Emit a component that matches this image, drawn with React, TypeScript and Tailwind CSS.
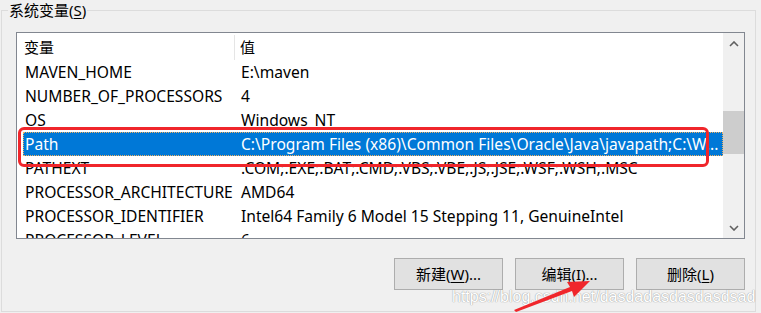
import React from "react";

const rows: { name: string; value: string; selected?: boolean }[] = [
  { name: "MAVEN_HOME", value: "E:\\maven" },
  { name: "NUMBER_OF_PROCESSORS", value: "4" },
  { name: "OS", value: "Windows_NT" },
  { name: "Path", value: "C:\\Program Files (x86)\\Common Files\\Oracle\\Java\\javapath;C:\\W...", selected: true },
  { name: "PATHEXT", value: ".COM;.EXE;.BAT;.CMD;.VBS;.VBE;.JS;.JSE;.WSF;.WSH;.MSC" },
  { name: "PROCESSOR_ARCHITECTURE", value: "AMD64" },
  { name: "PROCESSOR_IDENTIFIER", value: "Intel64 Family 6 Model 15 Stepping 11, GenuineIntel" },
  { name: "PROCESSOR_LEVEL", value: "6" },
];

function Btn({ label, hot, tail }: { label: string; hot: string; tail: string }) {
  return (
    <button className="flex h-[32px] w-[109px] items-center justify-center border border-[#adadad] bg-[#e1e1e1] text-[15px] text-black">
      {label}(<span className="underline underline-offset-2">{hot}</span>){tail}
    </button>
  );
}

export default function App() {
  return (
    <div
      className="relative h-[313px] w-[761px] overflow-hidden bg-[#f0f0f0] text-black"
      style={{ fontFamily: '"Noto Sans", "Noto Sans CJK SC", sans-serif' }}
    >
      {/* Group box */}
      <div className="relative ml-[1px] mt-[10px] flex h-[302px] w-[755px] flex-col border border-[#dcdcdc]">
        <div className="absolute -top-[11px] left-[6px] bg-[#f0f0f0] px-[1px] text-[15px] leading-[20px]">
          系统变量(<span className="underline underline-offset-2">S</span>)
        </div>

        {/* List view */}
        <div className="ml-[14px] mt-[21px] flex h-[207px] w-[729px] border border-[#828790] bg-white">
          <div className="flex min-w-0 flex-1 flex-col overflow-hidden">
            <div className="flex h-[27px] shrink-0 items-center pt-[2px] text-[15px]">
              <div className="flex h-full w-[218px] items-center border-r border-[#e5e5e5] pl-[7px]">变量</div>
              <div className="pl-[5px]">值</div>
            </div>
            {rows.map((r) => (
              <div
                key={r.name}
                className={
                  "ml-[6px] flex h-[24px] shrink-0 items-center whitespace-nowrap pt-[2px] text-[15.6px] " +
                  (r.selected ? "bg-[#0078d7] text-white outline outline-1 outline-dotted outline-[#f0b060] -outline-offset-1" : "")
                }
              >
                <div className="w-[212px] pl-[2px]">{r.name}</div>
                <div className="pl-[6px]">{r.value}</div>
              </div>
            ))}
          </div>
          {/* Scrollbar */}
          <div className="flex w-[21px] shrink-0 flex-col items-center bg-[#f0f0f0]">
            <div className="flex h-[21px] w-full items-center justify-center">
              <svg width="10" height="6" viewBox="0 0 10 6">
                <path d="M1 5 L5 1 L9 5" fill="none" stroke="#606060" strokeWidth="1.6" />
              </svg>
            </div>
            <div className="mt-[57px] h-[43px] w-full bg-[#cdcdcd]" />
            <div className="flex-1" />
            <div className="flex h-[21px] w-full items-center justify-center">
              <svg width="10" height="6" viewBox="0 0 10 6">
                <path d="M1 1 L5 5 L9 1" fill="none" stroke="#606060" strokeWidth="1.6" />
              </svg>
            </div>
          </div>
        </div>

        {/* Buttons */}
        <div className="mr-[10px] mt-[19px] flex justify-end gap-[12px]">
          <Btn label="新建" hot="W" tail="..." />
          <Btn label="编辑" hot="I" tail="..." />
          <Btn label="删除" hot="L" tail="" />
        </div>
      </div>

      {/* Red annotation box */}
      <div className="pointer-events-none absolute left-[18px] top-[127px] h-[40px] w-[691px] rounded-[6px] border-[3px] border-[#f0262b]" />

      {/* Watermark */}
      <div
        className="pointer-events-none absolute left-[452px] top-[285px] whitespace-nowrap text-[16px] leading-[24px] text-white"
        style={{ fontFamily: '"Liberation Sans", Arial, sans-serif', textShadow: "0 0 1px #a0a0a0, 0 0 1px #a0a0a0" }}
      >
        https://blog.csdn.net/dasdadasdasdasdsad
      </div>

      {/* Red arrow */}
      <svg className="pointer-events-none absolute left-0 top-0" width="761" height="313">
        <polygon points="514,310 570,287 567,282 590,281 574,297 572,291 516,312" fill="#f0262b" />
      </svg>
    </div>
  );
}
